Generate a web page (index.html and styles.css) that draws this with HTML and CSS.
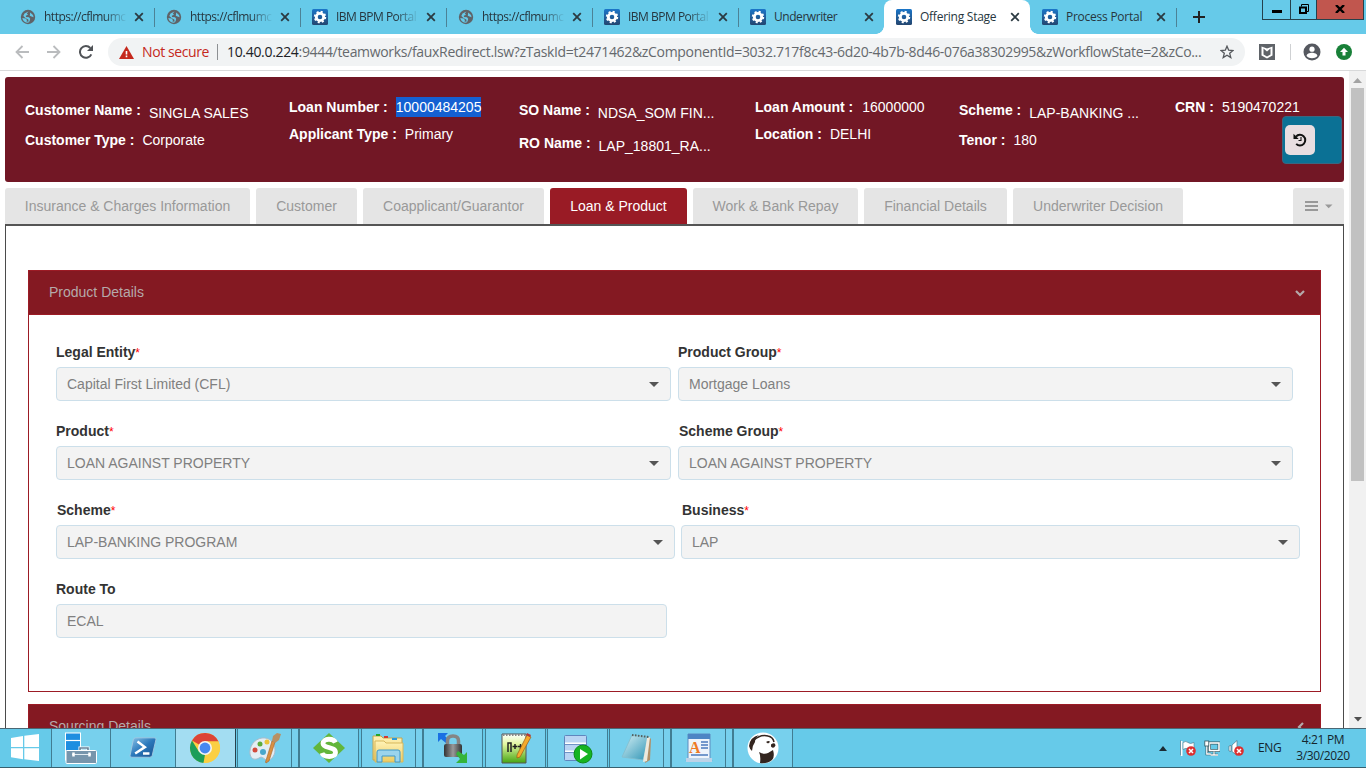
FILE: index.html
```html
<!DOCTYPE html>
<html lang="en">
<head>
<meta charset="utf-8">
<title>Offering Stage</title>
<link rel="stylesheet" href="styles.css">
</head>
<body>
<svg class="defs" width="0" height="0">
  <defs>
    <linearGradient id="gBlue" x1="0" y1="0" x2="0" y2="1"><stop offset="0" stop-color="#1b76c9"/><stop offset="1" stop-color="#24466f"/></linearGradient>
    <linearGradient id="gShell" x1="0" y1="0" x2="1" y2="1"><stop offset="0" stop-color="#8cc4e8"/><stop offset=".5" stop-color="#2a78bb"/><stop offset="1" stop-color="#1a4f8c"/></linearGradient>
    <linearGradient id="gFolder" x1="0" y1="0" x2="0" y2="1"><stop offset="0" stop-color="#fff3b8"/><stop offset="1" stop-color="#edcb60"/></linearGradient>
    <linearGradient id="gLock" x1="0" y1="0" x2="1" y2="0"><stop offset="0" stop-color="#333"/><stop offset=".5" stop-color="#999"/><stop offset="1" stop-color="#333"/></linearGradient>
    <linearGradient id="gNpp" x1="0" y1="0" x2="0" y2="1"><stop offset="0" stop-color="#fff"/><stop offset=".35" stop-color="#e2f7a0"/><stop offset="1" stop-color="#46a512"/></linearGradient>
    <linearGradient id="gPad" x1="0" y1="0" x2="1" y2="1"><stop offset="0" stop-color="#d5f0f5"/><stop offset="1" stop-color="#2e94b5"/></linearGradient>
    <symbol id="globe" viewBox="0 0 16 16"><circle cx="8" cy="8" r="7.200" fill="#5f6368"/><path d="M8.500 2.600 6.800 4.600 8 5.800 5.800 6.800 6 8l3 .2 1.200 1.500-.6 2.600-1.400 1.500C5 13.800 2.800 11.700 2.300 9l3.300.5 1.300 1.600-.3 1.700 2-.4-.3-1.900-2.500-1.200L3.300 7 4.500 4.500Z" fill="#66cae9"/><path d="M10.200 3.600 13 6 13.600 8.200 11.500 7.400 9.800 6.800Z" fill="#66cae9"/></symbol>
    <symbol id="gear" viewBox="0 0 16 16"><rect width="16" height="16" rx="1.500" fill="url(#gBlue)"/><circle cx="8" cy="8" r="3.700" fill="none" stroke="#fff" stroke-width="2.800"/><circle cx="8" cy="8" r="5.300" fill="none" stroke="#fff" stroke-width="1.800" stroke-dasharray="2.080 2.080"/></symbol>
    <symbol id="x" viewBox="0 0 10 10"><path d="M1.200 1.200 8.800 8.800M8.800 1.200 1.200 8.800" stroke="#2b3a42" stroke-width="1.800" fill="none"/></symbol>
    <symbol id="bad" viewBox="0 0 10 10"><circle cx="5" cy="5" r="4.800" fill="#dc3030"/><path d="M3 3l4 4M7 3 3 7" stroke="#fff" stroke-width="1.500"/></symbol>
  </defs>
</svg>

<div class="tabstrip">
  <div class="btab"><svg class="fav"><use href="#globe"/></svg><span class="t fade">https://cflmumc</span><svg class="close"><use href="#x"/></svg></div>
  <div class="btab"><svg class="fav"><use href="#globe"/></svg><span class="t fade">https://cflmumc</span><svg class="close"><use href="#x"/></svg></div>
  <div class="btab"><svg class="fav"><use href="#gear"/></svg><span class="t fade ibm">IBM BPM Portal</span><svg class="close"><use href="#x"/></svg></div>
  <div class="btab"><svg class="fav"><use href="#globe"/></svg><span class="t fade">https://cflmumc</span><svg class="close"><use href="#x"/></svg></div>
  <div class="btab"><svg class="fav"><use href="#gear"/></svg><span class="t fade ibm">IBM BPM Portal</span><svg class="close"><use href="#x"/></svg></div>
  <div class="btab nosep"><svg class="fav"><use href="#gear"/></svg><span class="t tight">Underwriter</span><svg class="close"><use href="#x"/></svg></div>
  <div class="btab current"><svg class="fav"><use href="#gear"/></svg><span class="t">Offering Stage</span><svg class="close"><use href="#x"/></svg></div>
  <div class="btab"><svg class="fav"><use href="#gear"/></svg><span class="t">Process Portal</span><svg class="close"><use href="#x"/></svg></div>
  <svg class="plus" width="12" height="12"><path d="M6 0v12M0 6h12" stroke="#222" stroke-width="2"/></svg>
  <div class="winbtns">
    <div class="wb min"><svg width="10" height="4"><path d="M0 1.500h10" stroke="#000" stroke-width="3"/></svg></div>
    <div class="wb max"><svg width="10" height="10"><path d="M2.500 2.500V.5h7v7h-2" fill="none" stroke="#000"/><path d="M1 3.500h6v5.500H1z" fill="none" stroke="#000" stroke-width="2"/></svg></div>
    <div class="wb cls"><svg width="10" height="8"><path d="M1 0 9 8M9 0 1 8" stroke="#000" stroke-width="2.400"/></svg></div>
  </div>
</div>

<div class="toolbar">
  <svg class="nav" width="14" height="14"><path d="M14 7H1.500M7.500 1 1.500 7l6 6" fill="none" stroke="#babcbe" stroke-width="1.800"/></svg>
  <svg class="nav" width="14" height="14"><path d="M0 7h12.500M6.500 1l6 6-6 6" fill="none" stroke="#babcbe" stroke-width="1.800"/></svg>
  <svg class="nav reload" width="14" height="14"><path d="M12.300 9.300A5.900 5.900 0 1 1 11.300 3" fill="none" stroke="#505357" stroke-width="2"/><path d="M14 0v6H8z" fill="#505357"/></svg>
  <div class="omnibox">
    <svg class="warn" width="15" height="13" viewBox="0 0 14 13" preserveAspectRatio="none"><path d="M7 0 14 13H0z" fill="#c5281c"/><path d="M7 5v3.500M7 9.600v1.600" stroke="#fff" stroke-width="1.500"/></svg>
    <span class="notsec">Not secure</span>
    <span class="obar"></span>
    <span class="url"><b>10.40.0.224</b>:9444/teamworks/fauxRedirect.lsw?zTaskId=t2471462&amp;zComponentId=3032.717f8c43-6d20-4b7b-8d46-076a38302995&amp;zWorkflowState=2&amp;zCo...</span>
    <svg class="star" width="14" height="14" viewBox="0 0 14 14"><path d="M7 1.200 8.700 5.200 13 5.500 9.700 8.300 10.800 12.600 7 10.300 3.200 12.600 4.300 8.300 1 5.500 5.300 5.200Z" fill="none" stroke="#55585c" stroke-width="1.300"/></svg>
  </div>
  <svg class="shield" width="16" height="16"><rect width="16" height="16" fill="#5f6368"/><path d="M2.500 2.500 8 4.500l5.500-2v9L8 14.500l-5.500-3z" fill="#fff"/><path d="M4.500 4.500 8 7.500l3.500-3v6L8 12.500l-3.500-2z" fill="#5f6368"/></svg>
  <span class="tbar"></span>
  <svg class="avatar" width="18" height="18"><circle cx="9" cy="9" r="8.500" fill="#55585f"/><circle cx="9" cy="6.200" r="2.600" fill="#fff"/><path d="M3.600 13c0-2 3-3.200 5.400-3.200s5.400 1.200 5.400 3.200c-2.600 3-8.200 3-10.800 0z" fill="#fff"/></svg>
  <svg class="update" width="16" height="16"><circle cx="8" cy="8" r="8" fill="#188038"/><path d="M8 3.800 12 8H9.500v3.500h-3V8H4z" fill="#fff"/></svg>
</div>

<div class="viewport">
  <div class="page">
    <div class="summary">
      <div class="col gap10">
        <div class="kv"><b>Customer Name :</b><span class="low">SINGLA SALES</span></div>
        <div class="kv"><b>Customer Type :</b><span>Corporate</span></div>
      </div>
      <div class="col up gap7">
        <div class="kv"><b>Loan Number :</b><span class="sel">10000484205</span></div>
        <div class="kv"><b>Applicant Type :</b><span>Primary</span></div>
      </div>
      <div class="col gap13">
        <div class="kv"><b>SO Name :</b><span class="low">NDSA_SOM FIN...</span></div>
        <div class="kv"><b>RO Name :</b><span class="low">LAP_18801_RA...</span></div>
      </div>
      <div class="col up gap7">
        <div class="kv"><b>Loan Amount :</b><span class="far">16000000</span></div>
        <div class="kv"><b>Location :</b><span>DELHI</span></div>
      </div>
      <div class="col gap10">
        <div class="kv"><b>Scheme :</b><span class="low">LAP-BANKING ...</span></div>
        <div class="kv"><b>Tenor :</b><span>180</span></div>
      </div>
      <div class="col up">
        <div class="kv"><b>CRN :</b><span>5190470221</span></div>
      </div>
      <div class="floater">
        <div class="hbtn"><svg width="15" height="14" viewBox="0 0 15 14"><path d="M3 3.600A5.300 5.300 0 1 1 3.200 10.900" fill="none" stroke="#111" stroke-width="2"/><path d="M.5.8V6h5.200z" fill="#111"/><path d="M8 4v3.500H5.500" fill="none" stroke="#111" stroke-width="1.100"/></svg></div>
      </div>
    </div>

    <div class="tabs">
      <div class="tab w1">Insurance &amp; Charges Information</div>
      <div class="tab w2">Customer</div>
      <div class="tab w3">Coapplicant/Guarantor</div>
      <div class="tab w4 active">Loan &amp; Product</div>
      <div class="tab w5">Work &amp; Bank Repay</div>
      <div class="tab w6">Financial Details</div>
      <div class="tab w7">Underwriter Decision</div>
      <div class="tab menu"><svg width="28" height="12"><path d="M0 2h13M0 6h13M0 10h13" stroke="#999" stroke-width="1.800"/><path d="M20 4.500h7.500L23.700 8.300z" fill="#999"/></svg></div>
    </div>

    <div class="tabbody">
      <section class="panel">
        <div class="phead"><span>Product Details</span><svg width="10" height="7"><path d="M1 1l4 4 4-4" fill="none" stroke="#b5a9aa" stroke-width="2.200"/></svg></div>
        <div class="pbody">
          <div class="row">
            <div class="field"><label>Legal Entity<i>*</i></label><div class="box">Capital First Limited (CFL)<span class="caret"></span></div></div>
            <div class="field"><label>Product Group<i>*</i></label><div class="box">Mortgage Loans<span class="caret"></span></div></div>
          </div>
          <div class="row">
            <div class="field"><label>Product<i>*</i></label><div class="box">LOAN AGAINST PROPERTY<span class="caret"></span></div></div>
            <div class="field"><label class="in1">Scheme Group<i>*</i></label><div class="box">LOAN AGAINST PROPERTY<span class="caret"></span></div></div>
          </div>
          <div class="row wide">
            <div class="field"><label class="in1">Scheme<i>*</i></label><div class="box">LAP-BANKING PROGRAM<span class="caret"></span></div></div>
            <div class="field"><label class="in1">Business<i>*</i></label><div class="box">LAP<span class="caret"></span></div></div>
          </div>
          <div class="row">
            <div class="field single"><label>Route To</label><div class="box">ECAL</div></div>
          </div>
        </div>
      </section>
      <section class="panel">
        <div class="phead"><span>Sourcing Details</span><svg width="8" height="10"><path d="M6 1 2 5l4 4" fill="none" stroke="#b5a9aa" stroke-width="2.200"/></svg></div>
      </section>
    </div>
  </div>
  <div class="scroll">
    <svg width="9" height="5"><path d="M4.500 0 9 5H0z" fill="#a3a3a3"/></svg>
    <div class="thumb"></div>
    <svg class="down" width="8" height="5"><path d="M4 4.500 8 0H0z" fill="#505050"/></svg>
  </div>
</div>

<div class="taskbar">
  <div class="item start"><svg width="28" height="27"><path d="M0 4 12 2v11H0zM13.300 1.800 28 0v13H13.300zM0 14.200h12v11L0 23.200zM13.300 14.200H28V27l-14.700-1.800z" fill="#fff"/></svg></div>
  <div class="item k1"><svg width="34" height="34"><rect x="1.500" y="2" width="15" height="27" fill="#1e8ee0" stroke="#fff" stroke-width="1"/><path d="M2 9.500h14.500" stroke="#fff" stroke-width="1.200"/><path d="M16 20v-3h8v3" fill="none" stroke="#fff" stroke-width="3"/><path d="M16 20v-3h8v3" fill="none" stroke="#66829a" stroke-width="1.600"/><rect x="2" y="19.500" width="30.500" height="13" rx="1" fill="#7795ac" stroke="#fff"/><path d="M8 23.500h19" stroke="#e2ebf1"/><path d="M9.500 21.500v4M25.500 21.500v4" stroke="#fff" stroke-width="2.500"/></svg></div>
  <div class="item k2"><svg width="28" height="24" viewBox="0 0 30 26"><path d="M7 2h20q2.500 0 2 2l-4 17q-.5 2-3 2H3q-2.500 0-2-2L4.500 4Q5 2 7 2z" fill="url(#gShell)" stroke="#a2c9e2"/><path d="m9 6 8 6-10.500 7M15 19h7" fill="none" stroke="#fff" stroke-width="2.700"/></svg></div>
  <div class="item k3 on"><svg width="32" height="32" viewBox="0 0 32 32"><circle cx="16" cy="16" r="15" fill="#fbcf43"/><path d="M16 16 3 8.500A15 15 0 0 1 29.500 9.500H16z" fill="#dc4437"/><path d="M3 8.500 9.800 19.500 16 22.500 14.500 31A15 15 0 0 1 3 8.500z" fill="#1c9e59"/><path d="M29.400 9.500H16l6 8.500-7.500 13A15 15 0 0 0 29.400 9.500z" fill="#fbcf43"/><circle cx="16" cy="16" r="7" fill="#f4f4f4"/><circle cx="16" cy="16" r="5.400" fill="#4688f1"/></svg></div>
  <div class="item k4 stack"><svg width="32" height="32" viewBox="0 0 32 32"><path d="M13 6C5 7 0 15 1 22c1 6 6 6 9 4s4 0 7 2 9-3 9-10S21 5 13 6z" fill="#e4edf4" stroke="#a9bccb"/><circle cx="6" cy="18" r="2.500" fill="#d34a3c"/><circle cx="11" cy="12" r="2.500" fill="#5bab3e"/><circle cx="18" cy="10" r="2.500" fill="#eac33a"/><circle cx="14" cy="20" r="3" fill="#49a7cc"/><path d="m16.500 30 6.500-21 3 1-6 19-3 2z" fill="#d99043" stroke="#a56223" stroke-width=".6"/><path d="m23 9 1-5 4-3 4 1-2 6-4 3z" fill="#b89064"/></svg></div>
  <div class="item k5"><svg width="32" height="32" viewBox="0 0 32 32"><path d="M16 1 32 16 16 31 0 16z" fill="#62b63b"/><path d="M22.500 10.500C20.500 6 10 6 10 11.500c0 5 12.500 3 12.500 9 0 5.500-12 5-13.500.5" fill="none" stroke="#fff" stroke-width="4.800"/></svg></div>
  <div class="item k6 stack"><svg width="34" height="32" viewBox="0 0 34 32"><path d="M1 4h8l2 2h19v22H1z" fill="url(#gFolder)" stroke="#c5a54c"/><path d="M4 2h4v2H4z" fill="#25a52a"/><path d="M12 4h4v2h-4z" fill="#d6382e"/><path d="M20 6h5v2h-5z" fill="#2999dc"/><path d="M3 9h9l2 2h17v19H3z" fill="url(#gFolder)" stroke="#d6b75d"/><path d="M5 30V20q0-2 2-2h19q2 0 2 2v10h-5v-6H10v6z" fill="#9bd4ed" stroke="#3f98c9"/></svg></div>
  <div class="item k7"><svg width="32" height="32" viewBox="0 0 32 32"><path d="M1 1h10L8 4l4 4-3 3-5-4-3 3z" fill="#1a70e3"/><path d="M10.500 14V9q0-5 5.500-5t5.500 5v5" fill="none" stroke="#858585" stroke-width="3.500"/><rect x="7" y="12" width="18" height="13" rx="2" fill="url(#gLock)"/><path d="m21 19 6 4 3-3v11H19l4-4-4-5z" fill="#35b43a"/></svg></div>
  <div class="item k8"><svg width="32" height="32" viewBox="0 0 32 32"><path d="M2 2h24v29H2z" fill="url(#gNpp)" stroke="#555"/><path d="M3 3h22" stroke="#888" stroke-width="2" stroke-dasharray="1.500 1.500"/><path d="M8 20V11h3v9M12.500 14.500h5M15 12v5M18 14.500h5M20.500 12v5" fill="none" stroke="#222" stroke-width="1.500"/><path d="M27 3 31 5 20 25l-3 1 0-3z" fill="#f4aa2c" stroke="#9b5b16" stroke-width=".7"/><path d="m26 3 1-2 4 2-1 2z" fill="#b4383a"/></svg></div>
  <div class="item k9"><svg width="32" height="32" viewBox="0 0 32 32"><rect x="2.500" y="3.500" width="22" height="25" rx="1" fill="#b9d4f3" stroke="#5f86be"/><path d="M3 11.500h21M3 19.500h21" stroke="#fff" stroke-width="2"/><path d="M3 12.500h21M3 20.500h21" stroke="#6f93c6"/><circle cx="21" cy="22" r="9" fill="#16b421" stroke="#0e8a18"/><path d="m18 17 8 5-8 5.500z" fill="#fff"/></svg></div>
  <div class="item k10 stack"><svg width="32" height="32" viewBox="0 0 32 32"><path d="m28 5 2 2-1 21-5 3z" fill="#b18f66"/><path d="M11 3 28 5l-6 23L1 25z" fill="url(#gPad)" stroke="#84bccc" stroke-width=".8"/><path d="m26 6 3-1-3 24-4 1z" fill="#eee9dc"/><path d="m11 3 17 2" stroke="#53605f" stroke-width="2" stroke-dasharray="1.500 1.500"/></svg></div>
  <div class="item k11 stack"><svg width="28" height="30" viewBox="0 0 28 30"><path d="M3 1h22v24l2 3H1l2-3z" fill="#eef4fb" stroke="#5c8cc0"/><path d="M3 1h22v5H3z" fill="#4d85c4"/><text x="4" y="20" class="wpa">A</text><path d="M16 9h7M16 12h7M16 15h7M6 22h17" stroke="#4c7abd" stroke-width="1.300"/><path d="M1 25h26v4H1z" fill="#bdd3e8"/></svg></div>
  <div class="item k12"><svg width="32" height="32" viewBox="0 0 32 32"><circle cx="16" cy="16" r="15.500" fill="#fff"/><path d="M2 14Q3 5 12 3 8 6 8 10q-3 4-3 9-2-1-3-5z" fill="#33251f"/><path d="M7 8Q14 2 21 4q5 1 6 6" fill="none" stroke="#33251f" stroke-width="1.500"/><path d="M19 10q3-2 4 0l-2 1.500zM24 12.500q4-3 4.500 1-2 4-4.500 1z" fill="#33251f"/><path d="M13 31q1-7-1-11 5 3 9 1l5-3q2 7-1 10-5 4-12 3z" fill="#33251f"/></svg></div>
  <div class="tray">
    <svg class="up" width="8" height="5"><path d="M0 5 4 0l4 5z" fill="#1b2b33"/></svg>
    <svg class="ti" width="16" height="16"><path d="M1.500 1v15" stroke="#fff" stroke-width="2"/><path d="M3 2.500q3-2 5 0t6 0v7q-3 1-5.500-.5T3 9.500z" fill="#fff" stroke="#4c7686" stroke-width=".6"/><path d="M.5.500v15" stroke="#4c7686" stroke-width=".7"/><use href="#bad" x="6" y="6" width="10" height="10"/></svg>
    <svg class="ti" width="16" height="16"><rect x="5.500" y="3" width="9.500" height="7.500" fill="#66cae9" stroke="#32555f" stroke-width="3"/><rect x="5.500" y="3" width="9.500" height="7.500" fill="none" stroke="#fff" stroke-width="1.600"/><path d="M10 11.500V15M6.500 15h7.500M2.800 6v8h4" fill="none" stroke="#32555f" stroke-width="2.400"/><path d="M10 11.500V15M6.500 15h7.500M2.800 6v8h4" fill="none" stroke="#fff" stroke-width="1.300"/><rect x=".8" y="1" width="4" height="5" fill="#fff" stroke="#32555f" stroke-width=".8"/></svg>
    <svg class="ti" width="16" height="16"><path d="M1 6v5l2 .5V5.500zM4 5l5-4.500v15L4 11.500z" fill="#fff" stroke="#4c7686" stroke-width=".7"/><use href="#bad" x="6" y="6" width="10" height="10"/></svg>
    <span class="lang">ENG</span>
    <div class="clock"><span class="time">4:21 PM</span><span class="date">3/30/2020</span></div>
  </div>
</div>
</body>
</html>
```
FILE: styles.css
```css
* { box-sizing: border-box; }
body { margin: 0; width: 1366px; height: 768px; overflow: hidden; display: flex; flex-direction: column; background: #fff; font-family: "Liberation Sans", Arial, sans-serif; font-size: 14px; line-height: 20px; position: relative; }
svg { display: block; flex: none; }
.defs { position: absolute; }

.tabstrip { height: 34px; flex: none; background: #66cae9; display: flex; padding-left: 8px; font-family: "Open Sans", "Noto Sans", sans-serif; font-size: 12px; color: #26363e; position: relative; }
.btab { width: 146px; height: 34px; display: flex; align-items: center; padding-left: 12px; position: relative; }
.btab::after { content: ""; position: absolute; right: -1px; top: 8px; width: 1px; height: 19px; background: #4c8296; }
.btab.nosep::after, .btab.current::after { display: none; }
.fav { width: 16px; height: 16px; margin-right: 8px; }
.t { width: 82px; white-space: nowrap; letter-spacing: -.25px; }
.t.tight { letter-spacing: -.45px; }
.t.fade { letter-spacing: -.5px; -webkit-mask-image: linear-gradient(90deg, #000 60px, transparent 83px); mask-image: linear-gradient(90deg, #000 60px, transparent 83px); }
.close { width: 10px; height: 10px; margin-left: 8px; }
.current { background: #fff; border-radius: 8px 8px 0 0; }
.current::before { content: ""; position: absolute; left: -8px; right: -8px; bottom: 0; height: 8px; background: radial-gradient(circle at 0 0, transparent 7.500px, #fff 8px) left / 8px 8px no-repeat, radial-gradient(circle at 100% 0, transparent 7.500px, #fff 8px) right / 8px 8px no-repeat; }
.plus { margin: 11px 0 0 17px; }
.winbtns { margin-left: auto; margin-right: 2px; display: flex; height: 20px; border: 1px solid #24414c; border-top: 0; }
.wb { display: flex; align-items: center; justify-content: center; border-right: 1px solid #24414c; }
.wb.min { width: 28px; padding-top: 5px; }
.wb.max { width: 26px; padding-bottom: 2px; }
.wb.cls { width: 46px; background: #c1564e; border-right: 0; padding-bottom: 1px; }

.toolbar { height: 37px; flex: none; display: flex; align-items: center; border-bottom: 1px solid #d8d9da; padding-left: 15px; font-family: "Open Sans", "Noto Sans", sans-serif; }
.nav { margin-right: 18px; }
.nav.reload { margin-right: 15px; }
.omnibox { width: 1137px; height: 28px; border-radius: 14px; background: #f1f3f4; display: flex; align-items: center; padding-left: 11px; white-space: nowrap; }
.notsec { margin-left: 8px; width: 67px; color: #c5281c; letter-spacing: -.4px; }
.obar { width: 1px; height: 16px; background: #8d9093; margin: 0 9px 0 8px; }
.url { width: 977px; color: #65696d; letter-spacing: -.322px; }
.url b { font-weight: 400; color: #202124; }
.star { margin-left: 16px; }
.shield { margin-left: 14px; }
.tbar { width: 1px; height: 16px; background: #cfd1d3; margin: 0 12px 0 15px; }
.update { margin-left: 15px; }

.viewport { height: 657px; flex: none; display: flex; justify-content: space-between; overflow: hidden; }
.page { width: 1339px; margin-left: 5px; padding-top: 6px; }
.summary { height: 105px; border-radius: 3px; background: #721725; color: #fff; display: grid; grid-template-columns: 264px 230px 236px 204px 216px auto; padding-left: 20px; align-items: start; position: relative; }
.col { display: flex; flex-direction: column; padding-top: 23px; }
.col.up { padding-top: 20px; }
.gap7 { gap: 7px; }
.gap10 { gap: 10px; }
.gap13 { gap: 13px; }
.kv { display: flex; height: 20px; white-space: nowrap; }
.kv span { margin-left: 8px; }
.kv .far { margin-left: 9px; }
.kv .low { padding-top: 3px; }
.kv .sel { background: #1460d2; }
.floater { position: absolute; left: 1277px; top: 39px; width: 60px; height: 48px; border-radius: 4px; background: #0b7195; border: 1px solid #3b6680; padding: 8px 0 0 2px; }
.hbtn { width: 30px; height: 30px; border-radius: 5px; background: #e8dee1; display: flex; align-items: center; justify-content: center; }

.tabs { display: flex; gap: 6px; margin-top: 6px; height: 36px; }
.tab { background: #e5e5e5; color: #999; border-radius: 3px 3px 0 0; height: 36px; line-height: 36px; text-align: center; white-space: nowrap; }
.tab.active { background: #991b25; color: #fff; }
.w1 { width: 245px; } .w2 { width: 101px; } .w3 { width: 181px; } .w4 { width: 137px; } .w5 { width: 165px; } .w6 { width: 143px; } .w7 { width: 170px; }
.menu { width: 51px; margin-left: auto; padding: 12px 0 0 12px; }

.tabbody { border: 1px solid #4b4b4b; border-top: 2px solid #555; height: 560px; padding: 44px 22px 0; display: flex; flex-direction: column; gap: 12px; }
.panel { border: 1px solid #9c1b25; flex: none; }
.phead { background: #841922; height: 44px; border-bottom: 1px solid #9c1b25; color: #b5a9aa; display: flex; align-items: center; justify-content: space-between; padding: 0 15px 0 20px; }
.phead span { padding-bottom: 2px; }
.phead svg { margin-top: 1px; }
.pbody { height: 376px; padding: 27px 20px 0 27px; }
.row { display: flex; gap: 7px; height: 79px; }
.row.wide { gap: 6px; }
.field { width: 615px; }
.wide .field { width: 619px; }
.field.single { width: 611px; }
label { display: block; font-weight: 700; color: #333; height: 25px; }
label.in1 { padding-left: 1px; }
label i { color: #f00; font-style: normal; font-weight: 400; font-size: 12px; line-height: 1; }
.box { height: 34px; border: 1px solid #ccdfea; border-radius: 4px; background: #f3f3f3; color: #808080; padding: 0 11px 0 10px; display: flex; align-items: center; justify-content: space-between; }
.caret { border: 5px solid transparent; border-top-color: #555; border-bottom: 0; }

.scroll { width: 17px; background: #f1f1f1; display: flex; flex-direction: column; align-items: center; padding-top: 7px; }
.thumb { width: 13px; height: 393px; background: #c1c1c1; margin-top: 5px; }
.down { margin-top: 236px; }

.taskbar { height: 40px; flex: none; background: #66cae9; border-top: 1px solid #4b6774; border-bottom: 1px solid #37606f; display: flex; position: relative; }
.item { display: flex; align-items: center; justify-content: center; background: #77d0ed; border: 0 solid #417d92; border-right-width: 1px; flex: none; position: relative; }
.item.start { width: 52px; background: #66cae9; padding: 0 2px 2px 0; }
.k1 { width: 59px; } .k2 { width: 65px; }
.item.on { width: 60px; background: #a3ddf2; border-color: #27424d; padding-right: 1px; }
.k4, .k6, .k10, .k11 { border-left-width: 1px; }
.k4 { width: 55px; margin-left: 1px; }
.stack::after { content: ""; position: absolute; top: 0; left: 100%; width: 6px; height: 38px; margin-left: 1px; background: #77d0ed; border-right: 1px solid #417d92; }
.item.k5 { width: 60px; margin-left: 7px; border-left-width: 1px; }
.k6 { width: 55px; margin-left: 2px; }
.item.k7 { width: 60px; margin-left: 7px; border-left-width: 1px; }
.item.k8 { width: 61px; margin-left: 2px; border-left-width: 1px; }
.item.k9 { width: 61px; margin-left: 1px; border-left-width: 1px; }
.k10 { width: 55px; margin-left: 1px; }
.k11 { width: 55px; margin-left: 7px; }
.item.k12 { width: 60px; margin-left: 7px; border-left-width: 1px; }
.wpa { font: bold 16px "Liberation Serif", serif; fill: #ee7a25; }
.tray { margin-left: auto; display: flex; align-items: center; font-family: "Open Sans", "Noto Sans", sans-serif; font-size: 12px; color: #14262e; padding-right: 13px; }
.up { margin-right: 13px; }
.ti { margin-right: 8px; }
.lang { width: 24px; margin-left: 6px; letter-spacing: -.4px; }
.clock { width: 60px; margin-left: 11px; text-align: center; line-height: 16px; white-space: nowrap; display: flex; flex-direction: column; padding-bottom: 1px; letter-spacing: -.35px; }
```
